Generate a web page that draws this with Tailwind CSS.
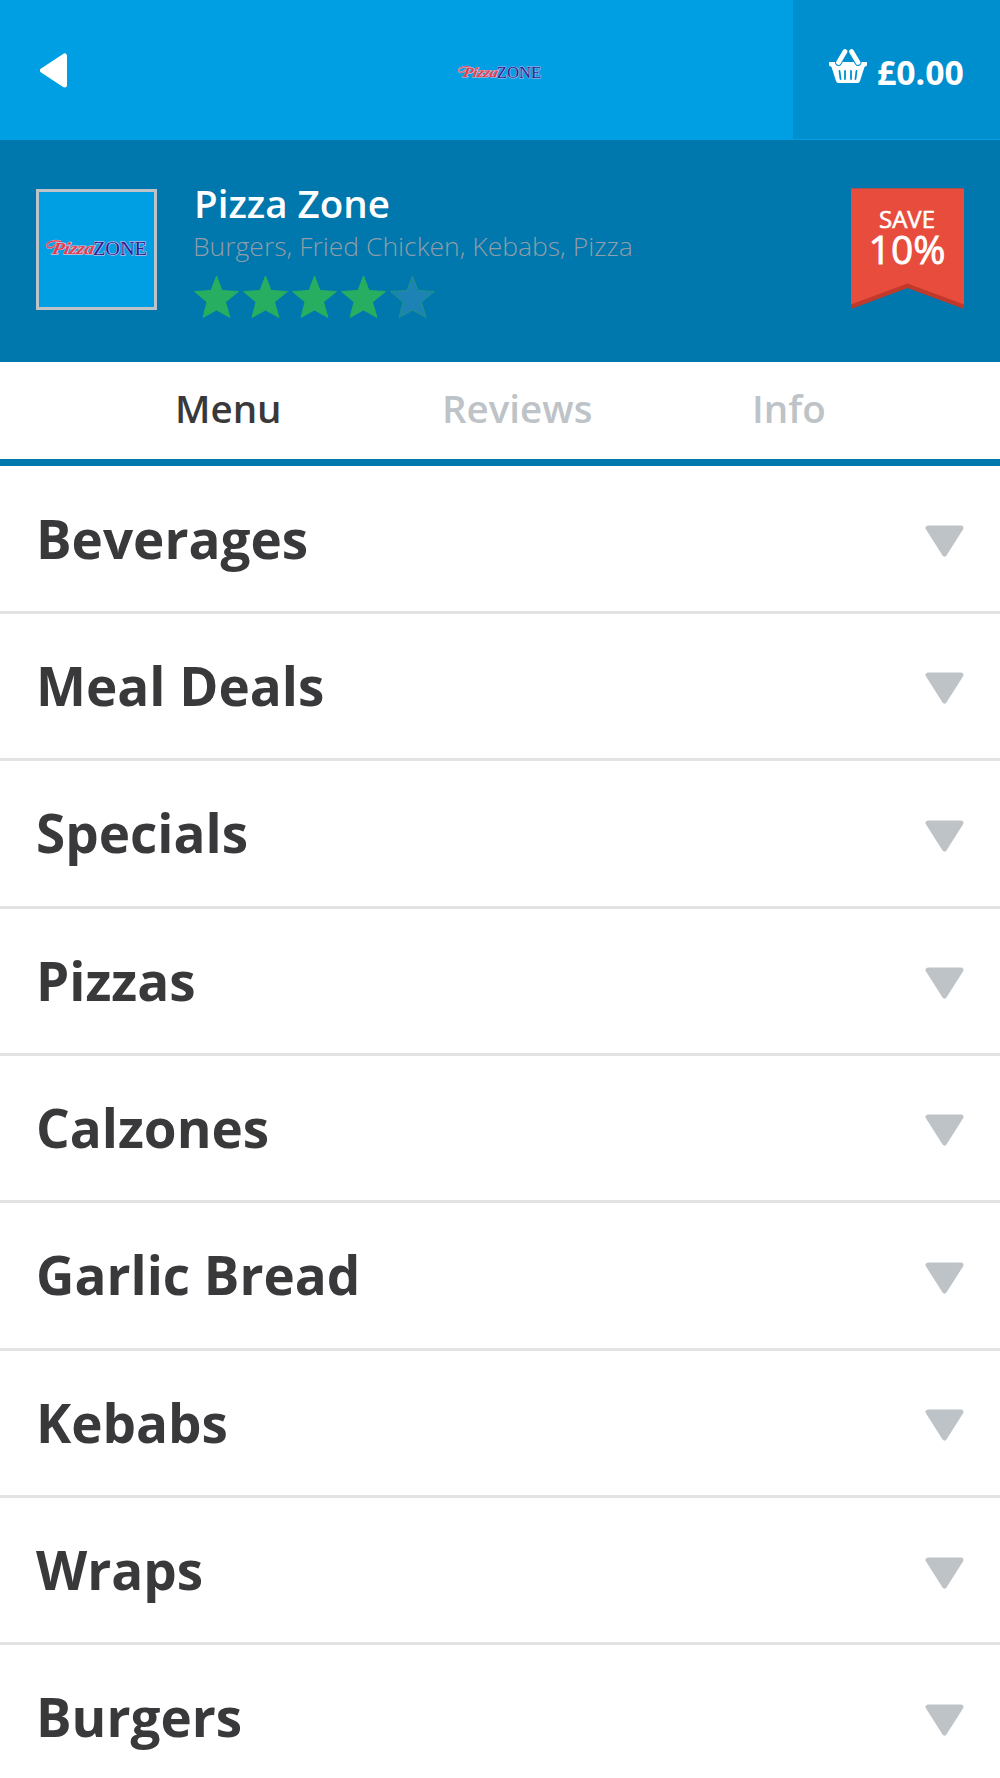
<!DOCTYPE html>
<html lang="en">
<head>
<meta charset="utf-8">
<title>Pizza Zone</title>
<script src="https://cdn.jsdelivr.net/npm/@tailwindcss/browser@4"></script>
</head>
<body class="bg-white w-[1000px] h-[1778px] overflow-hidden font-['Open_Sans',sans-serif] text-[#39393b]">
<svg class="hidden">
  <defs>
    <symbol id="logo" viewBox="0 0 102 18">
      <g stroke-width="1.300" paint-order="stroke" stroke-linejoin="round">
        <text x="5" y="15" font-family="Liberation Serif, serif" font-style="italic" font-weight="700" font-size="17" fill="#e63950" stroke="#d3bfd6" textLength="42" lengthAdjust="spacingAndGlyphs" transform="translate(4 0) skewX(-14)">Pizza</text>
        <text x="47" y="15.500" font-family="Liberation Serif, serif" font-size="19.500" fill="#2c1f96" stroke="#b3b9e2" textLength="54" lengthAdjust="spacingAndGlyphs">ZONE</text>
      </g>
      <path d="M15 2.500C8 .5 0 3.500 1 7s7 1.500 8-1.500" fill="none" stroke="#d3bfd6" stroke-width="2.200"/>
      <path d="M15 2.500C8 .5 0 3.500 1 7s7 1.500 8-1.500" fill="none" stroke="#e63950" stroke-width="1.200"/>
    </symbol>
    <symbol id="star" viewBox="0 0 45 43">
      <path d="M22.500 1 28 15.500 44.500 16.500 31.500 27 36 42.500 22.500 35 9 42.500 13 27 .5 16.500 17 15.500Z" stroke-width="1" stroke-linejoin="round"/>
    </symbol>
    <symbol id="down" viewBox="0 0 39 32">
      <path d="M3 3H36L19.500 29Z" fill="#bdc3c7" stroke="#bdc3c7" stroke-width="5" stroke-linejoin="round"/>
    </symbol>
  </defs>
</svg>

<header class="flex h-[140px] bg-[#009fe3]">
  <div class="w-[207px] pl-[39px] pt-[53px]">
    <svg class="w-7 h-[35px]" viewBox="0 0 28 35"><path d="M3.500 17.500 25.500 3V32Z" fill="#fff" stroke="#fff" stroke-width="5" stroke-linejoin="round"/></svg>
  </div>
  <div class="flex-1 flex justify-center pt-[65px] pr-px">
    <svg class="w-[84px] h-[15px]"><use href="#logo"/></svg>
  </div>
  <div class="w-[207px] h-[139px] bg-[#008fce] flex pl-9 pt-[49px]">
    <svg class="w-[38px] h-9 shrink-0" viewBox="0 0 38 36">
      <path d="M0 13H8Q10 17 13 13H25Q28 17 30 13H38V16.500L35.500 18 31 32Q30.500 34 28.500 34H9.500Q7.500 34 7 32L2.500 18 0 16.500Z" fill="#fff"/>
      <path d="M10.500 22 11.500 30M16 22V30M22 22V30M27.500 22 26.500 30" stroke="#008fce" stroke-width="1.800" stroke-linecap="round"/>
      <path d="M16 2.500 9.500 13.500M22.500 2.500 29 13.500" stroke="#008fce" stroke-width="6.800" stroke-linecap="round"/>
      <path d="M16 2.500 9.500 13.500M22.500 2.500 29 13.500" stroke="#fff" stroke-width="4.800" stroke-linecap="round"/>
    </svg>
    <span class="ml-[10px] text-[33.700px] leading-[47px] font-bold text-white">£0.00</span>
  </div>
</header>

<section class="flex h-[222px] bg-[#0077ad] px-9 pt-[48px]">
  <div class="mt-[0.500px] size-[121px] border-[3px] border-[#bdc3c7] bg-[#009fe3] flex items-center justify-center">
    <svg class="w-[102px] h-[18px] shrink-0 mb-0.5"><use href="#logo"/></svg>
  </div>
  <div class="ml-9 flex-1">
    <h1 class="pl-px text-[38.500px] leading-[48px] -mt-[9px] font-semibold text-white">Pizza Zone</h1>
    <p class="mt-px text-[26.500px] leading-9 font-light text-[#8f9ea8]">Burgers, Fried Chicken, Kebabs, Pizza</p>
    <div class="flex gap-1 mt-[11px] pl-px fill-[#27ae60] stroke-[#27ae60]">
      <svg class="w-[45px] h-[43px]"><use href="#star"/></svg>
      <svg class="w-[45px] h-[43px]"><use href="#star"/></svg>
      <svg class="w-[45px] h-[43px]"><use href="#star"/></svg>
      <svg class="w-[45px] h-[43px]"><use href="#star"/></svg>
      <svg class="w-[45px] h-[43px] fill-[#1d83b5] stroke-[#1f9583]"><use href="#star"/></svg>
    </div>
  </div>
  <div class="relative w-[113px] h-[121px] text-white text-center">
    <svg class="absolute inset-0 w-[113px] h-[121px]" viewBox="0 0 113 121"><path d="M0 .5H113V121L56.500 100 0 121Z" fill="#c0392b"/><path d="M0 .5H113V116.500L56.500 95.500 0 116.500Z" fill="#e74c3c"/></svg>
    <div class="relative pt-4 pr-px text-[24px] leading-[30px] [-webkit-text-stroke:0.6px_white]">SAVE</div>
    <div class="relative pr-px text-[39px] leading-[30px] [-webkit-text-stroke:0.8px_white]">10%</div>
  </div>
</section>

<nav class="flex h-[104px] border-b-[7px] border-[#0077ad] pl-[175px] text-[38.500px] leading-[92px] font-semibold text-[#bdc3c7]">
  <span class="w-[267px] text-[#39393b]">Menu</span>
  <span class="w-[310px]">Reviews</span>
  <span>Info</span>
</nav>

<main id="list" class="pt-[0.600px]"></main>

<script>
  const names = ["Beverages", "Meal Deals", "Specials", "Pizzas", "Calzones", "Garlic Bread", "Kebabs", "Wraps", "Burgers"];
  document.getElementById("list").innerHTML = names.map(n => `
    <div class="flex justify-between h-[147.350px] border-b-[3px] border-[#e3e3e5] px-9">
      <h2 class="text-[53px] leading-[143.500px] font-bold">${n}</h2>
      <svg class="w-[39px] h-8 mt-[58.500px]"><use href="#down"/></svg>
    </div>`).join("");
</script>
</body>
</html>
